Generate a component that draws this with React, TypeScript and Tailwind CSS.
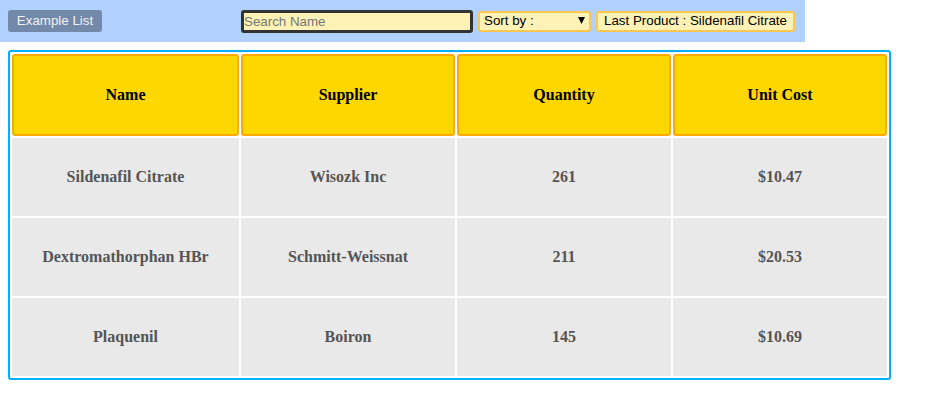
import { useState } from "react";

type Product = {
  name: string;
  supplier: string;
  quantity: number;
  unitCost: string;
};

const products: Product[] = [
  { name: "Sildenafil Citrate", supplier: "Wisozk Inc", quantity: 261, unitCost: "$10.47" },
  { name: "Dextromathorphan HBr", supplier: "Schmitt-Weissnat", quantity: 211, unitCost: "$20.53" },
  { name: "Plaquenil", supplier: "Boiron", quantity: 145, unitCost: "$10.69" },
];

const headers = ["Name", "Supplier", "Quantity", "Unit Cost"];

export default function App() {
  const [search, setSearch] = useState("");

  return (
    <div className="min-h-[412px] bg-white font-['Liberation_Sans',Arial,sans-serif]">
      {/* top bar */}
      <div className="flex h-[42px] w-[805px] items-center bg-[#b0d0fe] pl-2 text-[13.333px]">
        <button className="h-[22px] w-[94px] rounded-[3px] bg-[#7289a9] text-[#f2f2f2]">
          Example List
        </button>
        <input
          value={search}
          onChange={(e) => setSearch(e.target.value)}
          placeholder="Search Name"
          className="ml-[139px] h-[23px] w-[232px] rounded-[3px] border-[3px] border-[#333] bg-[#fff2b7] px-0 text-[13.333px] text-black outline-none placeholder:text-[#757575]"
        />
        <div className="ml-[5px] flex h-[21px] w-[113px] items-center justify-between rounded-[3px] border-2 border-[#ffc74e] bg-[#fff2b7] pl-[4px] pr-[4px] text-black">
          <span>Sort by :</span>
          <svg width="7" height="7" viewBox="0 0 7 7" className="mb-[2px]">
            <path d="M0 0h7L3.5 7z" fill="#000" />
          </svg>
        </div>
        <div className="ml-[5px] flex h-[21px] w-[199px] items-center justify-center rounded-[3px] border-2 border-[#ffc74e] bg-[#fff2b7] text-black">
          Last Product : Sildenafil Citrate
        </div>
      </div>

      {/* table */}
      <div className="pl-2 pt-2">
        <table className="w-[883px] table-fixed border-separate border-spacing-[2px] rounded-[3px] border-2 border-[#00b0ff] font-['Liberation_Serif','Times_New_Roman',serif] text-[16px] font-bold">
          <colgroup>
            <col className="w-[227px]" />
            <col className="w-[214px]" />
            <col className="w-[214px]" />
            <col className="w-[214px]" />
          </colgroup>
          <thead>
            <tr>
              {headers.map((h) => (
                <th
                  key={h}
                  className="h-[82px] rounded-[3px] border-2 border-[#ffaa00] bg-[#ffd700] p-0 text-center text-black"
                >
                  {h}
                </th>
              ))}
            </tr>
          </thead>
          <tbody>
            {products.map((p) => (
              <tr key={p.name}>
                <td className="h-[78px] bg-[#e9e9e9] p-0 text-center text-[#555]">{p.name}</td>
                <td className="h-[78px] bg-[#e9e9e9] p-0 text-center text-[#555]">{p.supplier}</td>
                <td className="h-[78px] bg-[#e9e9e9] p-0 text-center text-[#555]">{p.quantity}</td>
                <td className="h-[78px] bg-[#e9e9e9] p-0 text-center text-[#555]">{p.unitCost}</td>
              </tr>
            ))}
          </tbody>
        </table>
      </div>
    </div>
  );
}
